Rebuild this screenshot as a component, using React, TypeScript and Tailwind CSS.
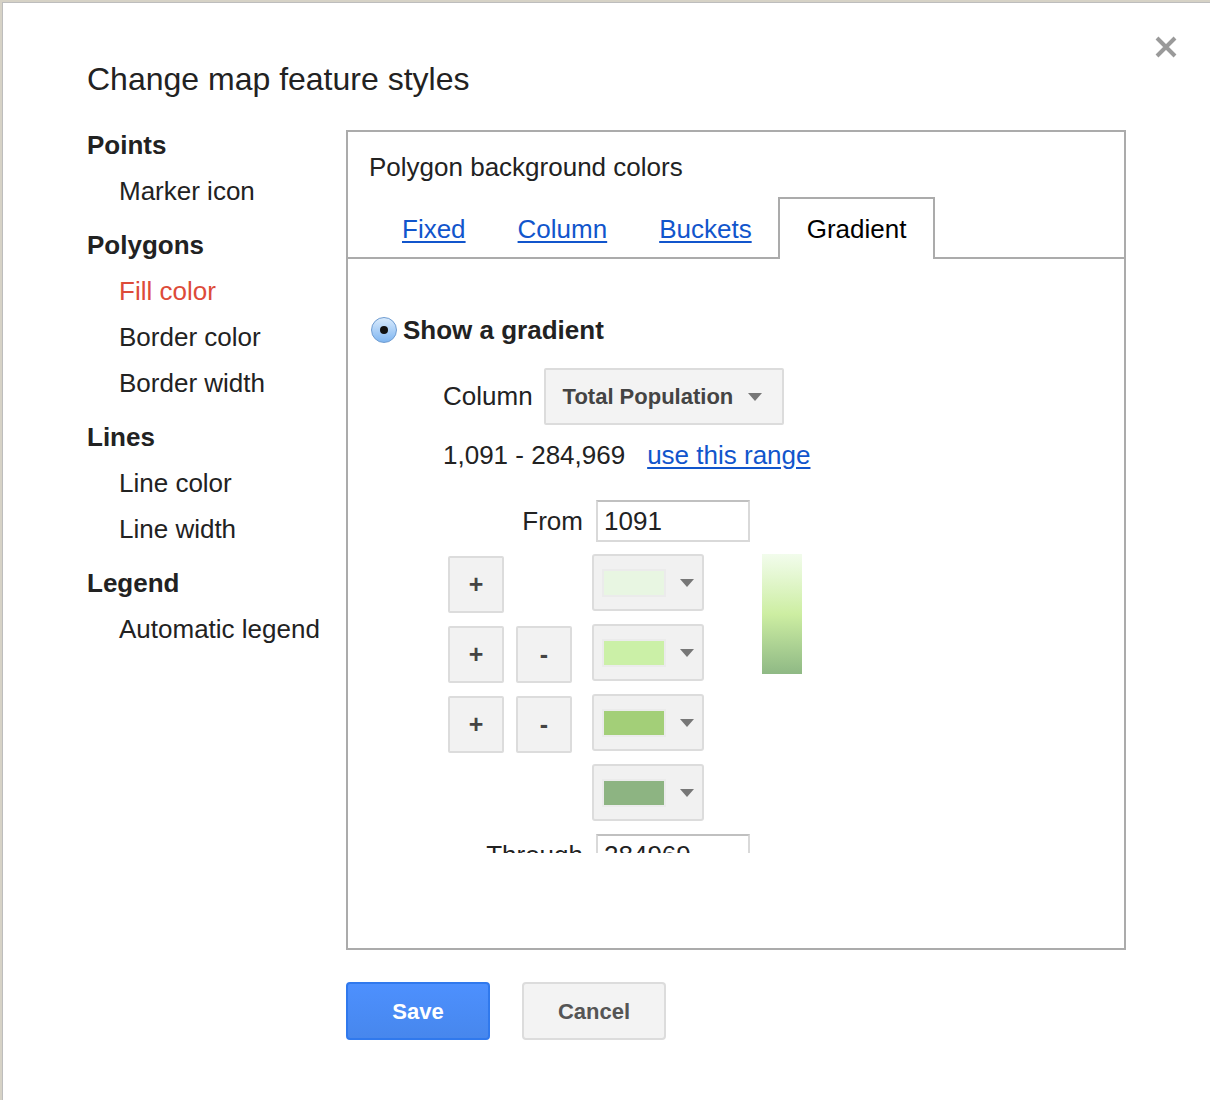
import React from "react";

const navGroups = [
  { title: "Points", items: ["Marker icon"] },
  { title: "Polygons", items: ["Fill color", "Border color", "Border width"] },
  { title: "Lines", items: ["Line color", "Line width"] },
  { title: "Legend", items: ["Automatic legend"] },
];

const stops = [
  { color: "#e8f6e2", plus: true, minus: false },
  { color: "#cbf0a7", plus: true, minus: true },
  { color: "#a3cf78", plus: true, minus: true },
  { color: "#8db482", plus: false, minus: false },
];

const SmallButton = ({ label }: { label: string }) => (
  <div className="flex h-[57px] w-[56px] translate-y-[2px] items-center justify-center rounded-[2px] border-2 border-[#dcdcdc] bg-[#f2f2f2] text-[25px] font-bold text-[#444]">
    {label}
  </div>
);

const Arrow = () => (
  <svg width="14" height="8" viewBox="0 0 14 8">
    <path d="M0 0 L14 0 L7 8 Z" fill="#777" />
  </svg>
);

const ColorPicker = ({ color }: { color: string }) => (
  <div className="flex h-[57px] w-[112px] items-center rounded-[3px] border-2 border-[#dcdcdc] bg-[#f1f1f1] pl-[8px]">
    <div className="border-2 border-[#ebebeb] p-0">
      <div className="h-[24px] w-[60px]" style={{ backgroundColor: color }} />
    </div>
    <div className="ml-[14px] flex items-center">
      <Arrow />
    </div>
  </div>
);

const App = () => {
  return (
    <div className="h-[1100px] w-[1210px] overflow-hidden bg-[#d6d2c6] pl-[2px] pt-[2px] font-['Liberation_Sans',Arial,sans-serif]">
      <div className="relative h-full w-full border-l border-t border-[#bdbdbd] bg-white pl-[84px] pt-[60px]">
        {/* close */}
        <div className="absolute right-[32px] top-[32px]">
          <svg width="24" height="24" viewBox="0 0 24 24">
            <path d="M3 3 L21 21 M21 3 L3 21" stroke="#9a9a9a" strokeWidth="4" />
          </svg>
        </div>

        <h1 className="text-[32px] leading-8 text-[#222]">Change map feature styles</h1>

        <div className="mt-[27px] flex">
          <div className="w-[259px]">
            {navGroups.map((group, gi) => (
              <div key={group.title} className={gi > 0 ? "mt-[8px]" : ""}>
                <div className="text-[26px] font-bold leading-[46px] text-[#222]">{group.title}</div>
                {group.items.map((item) => (
                  <div
                    key={item}
                    className={`pl-[32px] text-[26px] leading-[46px] ${
                      item === "Fill color" ? "text-[#dd4b39]" : "text-[#222]"
                    }`}
                  >
                    {item}
                  </div>
                ))}
              </div>
            ))}
          </div>

          <div>
            <div className="mt-[8px] h-[820px] w-[780px] border-2 border-[#ababab]">
              <div className="pt-[20px]">
                <div className="pl-[21px] text-[26px] leading-[30px] text-[#222]">Polygon background colors</div>
                <div className="mt-[15px] flex h-[62px] border-b-2 border-[#ababab] pl-[28px]">
                  {["Fixed", "Column", "Buckets"].map((t) => (
                    <div key={t} className="flex h-full items-center border-2 border-b-0 border-transparent px-[24px] pt-[2px]">
                      <span className="text-[26px] text-[#1155cc] underline underline-offset-[3px]">{t}</span>
                    </div>
                  ))}
                  <div className="mb-[-2px] flex h-[62px] items-center border-2 border-b-0 border-[#ababab] bg-white px-[27px]">
                    <span className="text-[26px] text-black">Gradient</span>
                  </div>
                </div>

                <div className="h-[594px] overflow-hidden pt-[56px]">
                  <div className="flex items-center pl-[23px]">
                    <div className="flex h-[26px] w-[26px] items-center justify-center rounded-full border border-[#6d9bd1] bg-gradient-to-b from-[#d8eafc] to-[#80b6f0]">
                      <div className="h-[8px] w-[8px] rounded-full bg-[#111]" />
                    </div>
                    <span className="ml-[6px] text-[26px] font-bold leading-[30px] text-[#222]">Show a gradient</span>
                  </div>

                  <div className="pl-[95px]">
                    <div className="mt-[23px] flex items-center">
                      <span className="text-[26px] text-[#222]">Column</span>
                      <div className="ml-[11px] flex h-[57px] w-[240px] items-center rounded-[2px] border-2 border-[#dcdcdc] bg-[#f3f3f3] pl-[17px]">
                        <span className="text-[22px] font-bold text-[#444]">Total Population</span>
                        <div className="ml-[15px] flex items-center">
                          <Arrow />
                        </div>
                      </div>
                    </div>

                    <div className="mt-[15px] flex text-[26px] leading-[30px]">
                      <span className="text-[#222]">1,091 - 284,969</span>
                      <span className="ml-[22px] text-[#1155cc] underline underline-offset-[3px]">use this range</span>
                    </div>

                    <div className="mt-[30px] flex items-center">
                      <span className="w-[140px] text-right text-[26px] text-[#222]">From</span>
                      <div className="ml-[13px] flex h-[42px] w-[154px] items-center border-2 border-[#d9d9d9] border-t-[#c0c0c0] pl-[6px] text-[26px] text-[#222]">
                        1091
                      </div>
                    </div>

                    <div className="mt-[12px] flex pl-[5px]">
                      <div className="flex flex-col gap-[13px]">
                        {stops.map((s, i) => (
                          <div key={i} className="flex h-[57px] items-center">
                            <div className="w-[56px]">{s.plus && <SmallButton label="+" />}</div>
                            <div className="ml-[12px] w-[56px]">{s.minus && <SmallButton label="-" />}</div>
                            <div className="ml-[20px]">
                              <ColorPicker color={s.color} />
                            </div>
                          </div>
                        ))}
                      </div>
                      <div className="ml-[58px] h-[120px] w-[40px] bg-gradient-to-b from-[#f2fcec] via-[#cdeea2] to-[#8fb985]" />
                    </div>

                    <div className="mt-[13px] flex items-center">
                      <span className="w-[140px] text-right text-[26px] text-[#222]">Through</span>
                      <div className="ml-[13px] flex h-[42px] w-[154px] items-center border-2 border-[#d9d9d9] border-t-[#c0c0c0] pl-[6px] text-[26px] text-[#222]">
                        284969
                      </div>
                    </div>
                  </div>
                </div>
              </div>
            </div>

            <div className="mt-[32px] flex gap-[32px]">
              <div className="flex h-[58px] w-[144px] items-center justify-center rounded-[4px] border-2 border-[#3079ed] bg-gradient-to-b from-[#4d90fe] to-[#4787ed] text-[22px] font-bold text-white">
                Save
              </div>
              <div className="flex h-[58px] w-[144px] items-center justify-center rounded-[4px] border-2 border-[#dcdcdc] bg-[#f3f3f3] text-[22px] font-bold text-[#555]">
                Cancel
              </div>
            </div>
          </div>
        </div>
      </div>
    </div>
  );
};

export default App;
